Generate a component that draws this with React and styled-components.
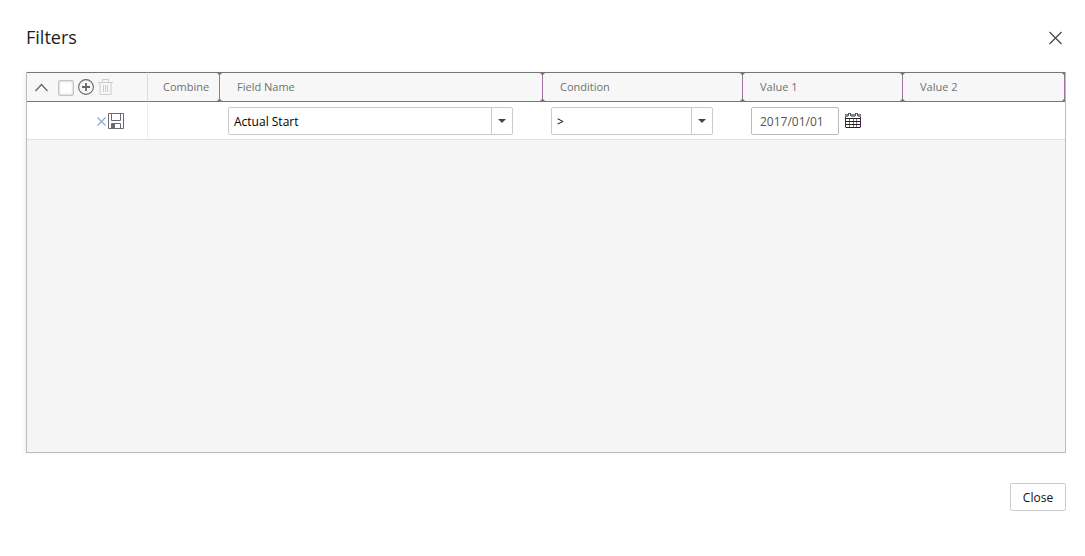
import React, { useState } from "react";
import styled, { createGlobalStyle } from "styled-components";

const GlobalStyle = createGlobalStyle`
  *, *::before, *::after { box-sizing: border-box; }
  body { margin: 0; background: #fff; }
  body, button, input, select { font-family: "Open Sans", "Noto Sans", sans-serif; font-size: 12px; }
`;

const Dialog = styled.main`
  display: flex;
  flex-direction: column;
  min-height: 100vh;
  padding: 24px 19px 45px 26px;
`;

const TitleBar = styled.header`
  display: flex;
  align-items: center;
  justify-content: space-between;
  height: 28px;
  margin-bottom: 20px;
`;

const Title = styled.h1`
  margin: 0;
  padding-bottom: 2px;
  font-size: 18px;
  font-weight: 400;
  line-height: 26px;
  color: #1c1c1c;
`;

const IconButton = styled.button`
  display: block;
  flex: none;
  width: ${(p) => p.$width || 16}px;
  height: 16px;
  padding: 0;
  border: 0;
  background: none;
  color: ${(p) => p.$color || "#666"};
  svg { display: block; }
`;

const CloseIconButton = styled(IconButton)`
  width: 14px;
  height: 14px;
  margin-right: 3px;
`;

const GridFrame = styled.section`
  flex: 1;
  border: 1px solid #bdbdbd;
  border-top: 0;
  background: #f5f5f5;
  box-shadow: -2px 0 3px rgba(0, 0, 0, 0.05);
`;

const Grid = styled.table`
  width: 100%;
  table-layout: fixed;
  border-collapse: separate;
  border-spacing: 0;
`;

const Column = styled.col`
  width: ${(p) => (p.$width ? `${p.$width}px` : "auto")};
`;

const HeadCell = styled.th`
  position: relative;
  height: 30px;
  padding: 0 0 0 ${(p) => p.$indent || 17}px;
  border-top: 1px solid #767676;
  border-bottom: 1px solid #767676;
  background: #f7f7f7;
  color: #707070;
  font-size: 11px;
  font-weight: 400;
  line-height: 16px;
  text-align: left;
  ${(p) => p.$plain && "border-right: 1px solid #ddd;"}
`;

const Grip = styled.span`
  position: absolute;
  top: 0;
  bottom: 0;
  right: ${(p) => (p.$last ? 0 : -2)}px;
  width: 5px;
  color: ${(p) => p.$color || "#a070a4"};
  background: linear-gradient(currentColor, currentColor) ${(p) => (p.$last ? "right" : "center")} / 1px 100% no-repeat;
  overflow: hidden;
  z-index: 1;
  &::before, &::after {
    content: "";
    position: absolute;
    left: ${(p) => (p.$last ? 2 : 0)}px;
    border: solid transparent;
    border-width: 0 2px;
    width: 5px;
  }
  &::before { top: 0; border-top: 2px solid #777; }
  &::after { bottom: 0; border-bottom: 2px solid #777; }
`;

const Cell = styled.td`
  height: 38px;
  padding: 0 ${(p) => p.$end || 8}px 0 8px;
  border-bottom: 1px solid #e0e0e0;
  background: #fff;
  ${(p) => p.$divided && "border-right: 1px solid #eee;"}
`;

const HeadTools = styled.div`
  display: flex;
  align-items: center;
  gap: 4px;
`;

const Checkbox = styled.input`
  appearance: none;
  flex: none;
  width: 16px;
  height: 16px;
  margin: 1px 0 0 4px;
  border: 1px solid #c4c4c4;
  border-radius: 2px;
  background: #fff;
  box-shadow: inset 0 0 2px 1px #ddd;
  &:checked { background: #999; }
`;

const RowTools = styled.div`
  display: flex;
  align-items: center;
  justify-content: flex-end;
  gap: 2px;
`;

const SelectBox = styled.div`
  position: relative;
  width: 100%;
  height: 28px;
  border: 1px solid #ccc;
  border-radius: 2px;
  background: #fff;
`;

const Select = styled.select`
  appearance: none;
  width: 100%;
  height: 26px;
  padding: 2px 26px 0 5px;
  border: 0;
  background: transparent;
  color: #000;
`;

const Arrow = styled.span`
  position: absolute;
  top: 0;
  right: 0;
  display: flex;
  align-items: center;
  justify-content: center;
  width: 21px;
  height: 26px;
  border-left: 1px solid #ccc;
  pointer-events: none;
  &::before {
    content: "";
    border: 4px solid transparent;
    border-top-color: #444;
    border-bottom: 0;
  }
`;

const DateField = styled.div`
  display: flex;
  align-items: center;
  gap: 6px;
`;

const DateInput = styled.input`
  width: 88px;
  height: 28px;
  padding: 2px 8px 0;
  border: 1px solid #bbb;
  border-radius: 2px;
  background: #fff;
  color: #555;
`;

const Footer = styled.footer`
  display: flex;
  justify-content: flex-end;
  margin-top: 30px;
`;

const CloseButton = styled.button`
  width: 56px;
  height: 28px;
  padding: 0;
  border: 1px solid #ccc;
  border-radius: 2px;
  background: #fff;
  color: #111;
`;

const Svg = ({ w = 16, h = 16, children }) => (
  <svg width={w} height={h} viewBox={`0 0 ${w} ${h}`} fill="none" stroke="currentColor" aria-hidden="true">
    {children}
  </svg>
);

const CrossIcon = () => (
  <Svg w={14} h={14}><path d="M.5 1l12 12M12.500 1L.5 13" strokeWidth="1.2" /></Svg>
);
const ChevronIcon = () => (
  <Svg><path d="M1.500 12L7.500 5.500l6 6.500" strokeWidth="1.300" /></Svg>
);
const AddIcon = () => (
  <Svg><circle cx="8" cy="8" r="7.400" strokeWidth="1.100" /><path d="M8 4v8M4 8h8" strokeWidth="1.800" /></Svg>
);
const TrashIcon = () => (
  <Svg>
    <path d="M0 3.500h15M4.500 3V.5h6V3M2 4v11.500h11V4M5.500 6v7M7.500 6v7M9.500 6v7" />
  </Svg>
);
const RemoveIcon = () => (
  <Svg w={9} h={16}><path d="M.5 4.500l8 8M8.500 4.500l-8 8" strokeWidth="1.200" /></Svg>
);
const SaveIcon = () => (
  <Svg>
    <path d="M.5.5h15v15H.5zM3.500.5v7h9v-7M3.500 15.500v-5h9v5" />
    <path d="M4 11h3v4H4z" fill="currentColor" stroke="none" />
  </Svg>
);
const CalendarIcon = () => (
  <Svg>
    <path d="M4.500 5v9M8.500 5v9M11.500 5v9" stroke="#8d7580" />
    <path d="M.5 1.500v13M15.500 1.500v13" stroke="#45204f" />
    <path d="M1 5.500h14M1 8.500h14M1 11.500h14M1 14.500h14" stroke="#222" />
    <path d="M0 1h3v3H0zM6 1h4v3H6zM13 1h3v3h-3z" fill="#858288" stroke="none" />
    <path d="M3.500 0v3M5.500 0v3M10.500 0v3M12.500 0v3M3.500.5h2M10.500.5h2" stroke="#456078" />
  </Svg>
);

function SelectField({ label, options }) {
  return (
    <SelectBox>
      <Select aria-label={label}>
        {options.map((o) => <option key={o}>{o}</option>)}
      </Select>
      <Arrow />
    </SelectBox>
  );
}

export default function App() {
  const [date, setDate] = useState("2017/01/01");
  return (
    <>
      <GlobalStyle />
      <Dialog>
        <TitleBar>
          <Title>Filters</Title>
          <CloseIconButton aria-label="Dismiss" $color="#444"><CrossIcon /></CloseIconButton>
        </TitleBar>
        <GridFrame>
          <Grid>
            <colgroup>
              <Column $width={121} />
              <Column $width={72} />
              <Column $width={323} />
              <Column $width={200} />
              <Column $width={160} />
              <Column />
            </colgroup>
            <thead>
              <tr>
                <HeadCell $indent={7} $plain>
                  <HeadTools>
                    <IconButton aria-label="Collapse"><ChevronIcon /></IconButton>
                    <Checkbox type="checkbox" aria-label="Select all" />
                    <IconButton aria-label="Add filter"><AddIcon /></IconButton>
                    <IconButton aria-label="Delete filters" $color="#ccc"><TrashIcon /></IconButton>
                  </HeadTools>
                </HeadCell>
                <HeadCell $indent={15}>Combine<Grip $color="#808878" /></HeadCell>
                <HeadCell>Field Name<Grip /></HeadCell>
                <HeadCell>Condition<Grip /></HeadCell>
                <HeadCell>Value 1<Grip /></HeadCell>
                <HeadCell>Value 2<Grip $last /></HeadCell>
              </tr>
            </thead>
            <tbody>
              <tr>
                <Cell $divided $end={23}>
                  <RowTools>
                    <IconButton aria-label="Remove filter" $width={9} $color="#8fa9cf"><RemoveIcon /></IconButton>
                    <IconButton aria-label="Save filter" $color="#6d6872"><SaveIcon /></IconButton>
                  </RowTools>
                </Cell>
                <Cell />
                <Cell $end={30}><SelectField label="Field Name" options={["Actual Start"]} /></Cell>
                <Cell $end={30}><SelectField label="Condition" options={[">"]} /></Cell>
                <Cell>
                  <DateField>
                    <DateInput aria-label="Value 1" value={date} onChange={(e) => setDate(e.target.value)} />
                    <IconButton aria-label="Choose date"><CalendarIcon /></IconButton>
                  </DateField>
                </Cell>
                <Cell />
              </tr>
            </tbody>
          </Grid>
        </GridFrame>
        <Footer><CloseButton>Close</CloseButton></Footer>
      </Dialog>
    </>
  );
}
